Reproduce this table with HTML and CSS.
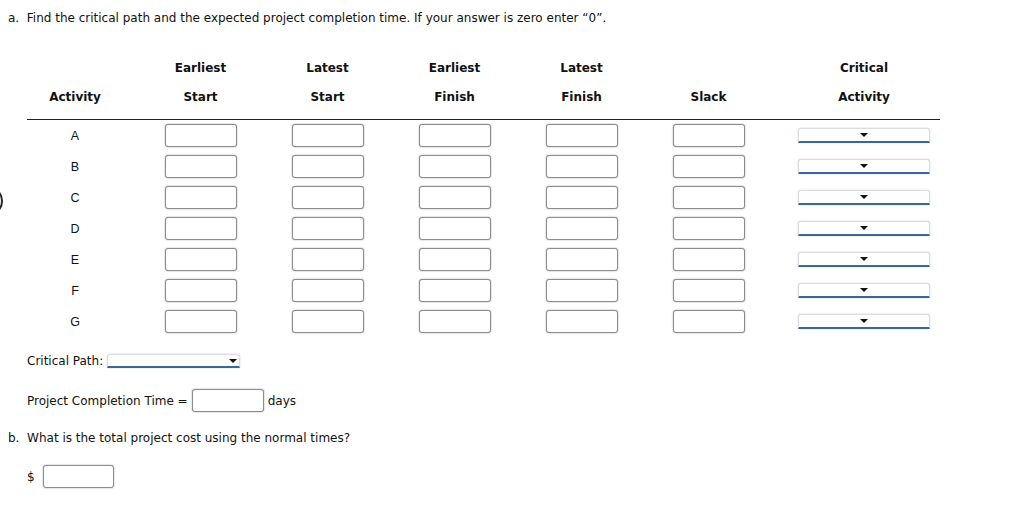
FILE: index.html
```html
<!DOCTYPE html>
<html>
<head>
<meta charset="utf-8">
<link rel="stylesheet" href="styles.css">
</head>
<body>
<div class="edge-mark"></div>
<div class="page">
  <p class="q">a.&nbsp; Find the critical path and the expected project completion time. If your answer is zero enter “0”.</p>

  <div class="grid">
    <div class="h h1 act"></div>
    <div class="h h1">Earliest</div>
    <div class="h h1">Latest</div>
    <div class="h h1">Earliest</div>
    <div class="h h1">Latest</div>
    <div class="h h1"></div>
    <div class="h h1 crit">Critical</div>

    <div class="h h2 act">Activity</div>
    <div class="h h2">Start</div>
    <div class="h h2">Start</div>
    <div class="h h2">Finish</div>
    <div class="h h2">Finish</div>
    <div class="h h2">Slack</div>
    <div class="h h2 crit">Activity</div>

    <div class="rule"></div>

    <div class="c act letter">A</div><div class="c"><span class="inp"></span></div><div class="c"><span class="inp"></span></div><div class="c"><span class="inp"></span></div><div class="c"><span class="inp"></span></div><div class="c"><span class="inp"></span></div><div class="c crit"><span class="sel"><span class="arrow"></span></span></div>
    <div class="c act letter">B</div><div class="c"><span class="inp"></span></div><div class="c"><span class="inp"></span></div><div class="c"><span class="inp"></span></div><div class="c"><span class="inp"></span></div><div class="c"><span class="inp"></span></div><div class="c crit"><span class="sel"><span class="arrow"></span></span></div>
    <div class="c act letter">C</div><div class="c"><span class="inp"></span></div><div class="c"><span class="inp"></span></div><div class="c"><span class="inp"></span></div><div class="c"><span class="inp"></span></div><div class="c"><span class="inp"></span></div><div class="c crit"><span class="sel"><span class="arrow"></span></span></div>
    <div class="c act letter">D</div><div class="c"><span class="inp"></span></div><div class="c"><span class="inp"></span></div><div class="c"><span class="inp"></span></div><div class="c"><span class="inp"></span></div><div class="c"><span class="inp"></span></div><div class="c crit"><span class="sel"><span class="arrow"></span></span></div>
    <div class="c act letter">E</div><div class="c"><span class="inp"></span></div><div class="c"><span class="inp"></span></div><div class="c"><span class="inp"></span></div><div class="c"><span class="inp"></span></div><div class="c"><span class="inp"></span></div><div class="c crit"><span class="sel"><span class="arrow"></span></span></div>
    <div class="c act letter">F</div><div class="c"><span class="inp"></span></div><div class="c"><span class="inp"></span></div><div class="c"><span class="inp"></span></div><div class="c"><span class="inp"></span></div><div class="c"><span class="inp"></span></div><div class="c crit"><span class="sel"><span class="arrow"></span></span></div>
    <div class="c act letter">G</div><div class="c"><span class="inp"></span></div><div class="c"><span class="inp"></span></div><div class="c"><span class="inp"></span></div><div class="c"><span class="inp"></span></div><div class="c"><span class="inp"></span></div><div class="c crit"><span class="sel"><span class="arrow"></span></span></div>
  </div>

  <div class="line cp-line">
    <span>Critical Path:</span>
    <span class="sel sel-wide"><span class="arrow arrow-right"></span></span>
  </div>

  <div class="line pct-line">
    <span>Project Completion Time =</span>
    <span class="inp pct-inp"></span>
    <span class="days">days</span>
  </div>

  <p class="q qb">b.&nbsp; What is the total project cost using the normal times?</p>

  <div class="line cost-line">
    <span>$</span>
    <span class="inp cost-inp"></span>
  </div>
</div>
</body>
</html>
```

FILE: styles.css
```css
html, body {
  margin: 0;
  padding: 0;
  background: #fff;
}
body {
  font-family: "DejaVu Sans", Verdana, sans-serif;
  font-size: 12px;
  color: #111;
  position: relative;
  width: 1024px;
  height: 515px;
  overflow: hidden;
}
.edge-mark {
  position: absolute;
  left: -15px;
  top: 189px;
  width: 14px;
  height: 20px;
  border: 2px solid #222;
  border-radius: 50%;
}
.page {
  padding: 10px 8px 0 8px;
}
.q {
  margin: 0;
  line-height: 16px;
  height: 16px;
}
.grid {
  margin-top: 28px;
  margin-left: 19px;
  width: 913px;
  display: grid;
  grid-template-columns: 110px repeat(5, 127px) 168px;
}
.h {
  font-weight: bold;
  text-align: center;
  height: 29px;
  line-height: 29px;
}
.h2 {
  margin-bottom: 7px;
}
.act {
  padding-right: 14px;
}
.crit {
  padding-left: 16px;
}
.rule {
  grid-column: 1 / -1;
  height: 0;
  border-top: 1px solid #222;
}
.c {
  height: 31px;
  display: flex;
  align-items: center;
  justify-content: center;
}
.letter {
  font-family: "Liberation Sans", Arial, sans-serif;
  font-size: 12.5px;
}
.inp {
  display: inline-block;
  box-sizing: border-box;
  width: 72px;
  height: 23px;
  border: 1px solid #8c8c8c;
  border-radius: 3px;
  background: #fff;
  box-shadow: 0 0 1.5px rgba(0, 0, 0, 0.45);
}
.sel {
  display: inline-flex;
  align-items: center;
  justify-content: center;
  box-sizing: border-box;
  width: 132px;
  height: 15px;
  background: #fff;
  border: 1px solid #dcdcdc;
  border-bottom: 2px solid #3d6696;
  border-radius: 3px 3px 0 0;
  box-shadow: 0 0 2px rgba(0, 0, 0, 0.2);
  position: relative;
}
.arrow {
  width: 0;
  height: 0;
  border-left: 4px solid transparent;
  border-right: 4px solid transparent;
  border-top: 4px solid #111;
}
.sel-wide {
  width: 133px;
  height: 14px;
  justify-content: flex-end;
  padding-right: 2px;
  margin-left: 4px;
}
.line {
  display: flex;
  align-items: center;
  margin-left: 19px;
}
.cp-line {
  margin-top: 16px;
  height: 16px;
}
.pct-line {
  margin-top: 20px;
  height: 23px;
}
.pct-inp {
  margin-left: 4px;
}
.days {
  margin-left: 4px;
}
.qb {
  margin-top: 18px;
}
.cost-line {
  margin-top: 19px;
  height: 23px;
}
.cost-inp {
  width: 71px;
  margin-left: 8px;
}
```
